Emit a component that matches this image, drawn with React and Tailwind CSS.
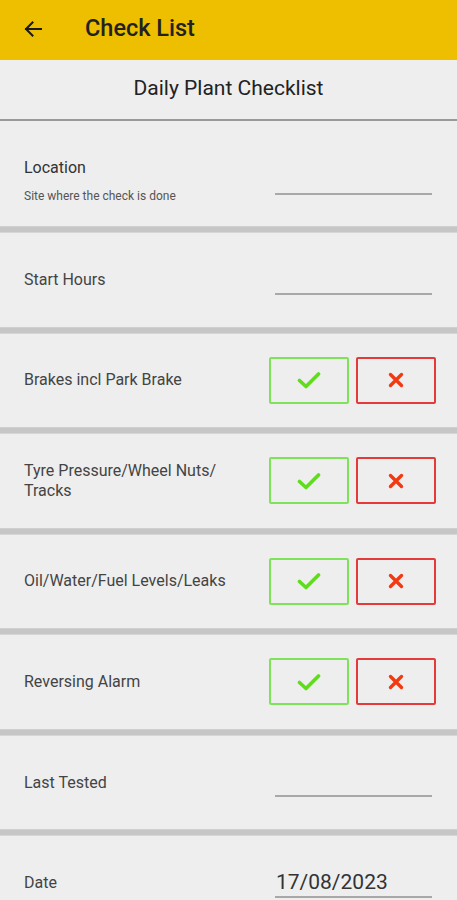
import React from "react";

const font = { fontFamily: "Roboto, 'Noto Sans', Arial, sans-serif" };

function Band() {
  return <div className="h-[7px] bg-[#c6c6c6] border-t border-b border-t-[#cfcfcf] border-b-[#d6d6d6]" />;
}

function Check() {
  return (
    <svg width="24" height="18" viewBox="0 0 24 18">
      <path d="M2.5 9.5 L9 15.5 L21.5 3" fill="none" stroke="#5fdc1c" strokeWidth="3.6" strokeLinecap="round" strokeLinejoin="round" />
    </svg>
  );
}

function Cross() {
  return (
    <svg width="16" height="16" viewBox="0 0 16 16">
      <path d="M2.5 2.5 L13.5 13.5 M13.5 2.5 L2.5 13.5" fill="none" stroke="#f23a12" strokeWidth="3.4" strokeLinecap="round" />
    </svg>
  );
}

function CheckRow({ label }) {
  return (
    <div className="h-[93.5px] flex items-center pl-[24px] pr-[21px]">
      <div className="flex-1 text-[16px] leading-[20px] text-[#444] pr-2">{label}</div>
      <div className="flex gap-[7px]">
        <div className="w-[80px] h-[47px] border-2 border-[#7fe35a] rounded-[2px] flex items-center justify-center">
          <Check />
        </div>
        <div className="w-[80px] h-[47px] border-2 border-[#e53a3a] rounded-[2px] flex items-center justify-center">
          <Cross />
        </div>
      </div>
    </div>
  );
}

function InputRow({ label, value }) {
  return (
    <div className="h-[93.5px] flex items-center pl-[24px] pr-[25px]">
      <div className="flex-1 text-[16px] leading-[20px] text-[#444] pt-[1px]">{label}</div>
      <div className="w-[157px] h-[30px] border-b-2 border-[#a8a8a8] flex items-end">
        {value && <span className="text-[21px] leading-[28px] text-[#333] pl-[1px]">{value}</span>}
      </div>
    </div>
  );
}

export default function App() {
  return (
    <div className="w-[457px] min-h-[900px] bg-[#eeeeee] overflow-hidden" style={font}>
      <div className="h-[60px] bg-[#edbf00] flex items-center">
        <svg className="ml-[24px] -mt-[2px]" width="18" height="18" viewBox="0 0 18 18">
          <path d="M17 9 H2 M8.5 2.5 L2 9 L8.5 15.5" fill="none" stroke="#1a1a1a" strokeWidth="2" strokeLinecap="square" />
        </svg>
        <div className="ml-[43px] text-[23.5px] font-medium text-[#222] leading-none -mt-[2px]">Check List</div>
      </div>
      <div className="h-[59px] flex items-center justify-center text-[21px] text-[#222] -mt-[1px]">
        Daily Plant Checklist
      </div>
      <div className="h-[2px] bg-[#9a9a9a] mt-[1px]" />
      <div className="h-[105px] flex items-center pl-[24px] pr-[25px] pt-[13px]">
        <div className="flex-1">
          <div className="text-[16px] leading-[20px] text-[#333]">Location</div>
          <div className="text-[12px] leading-[14px] text-[#555] mt-[11px]">Site where the check is done</div>
        </div>
        <div className="w-[157px] h-[30px] border-b-2 border-[#a8a8a8]" />
      </div>
      <Band />
      <InputRow label="Start Hours" />
      <Band />
      <CheckRow label="Brakes incl Park Brake" />
      <Band />
      <CheckRow label={<>Tyre Pressure/Wheel Nuts/<br />Tracks</>} />
      <Band />
      <CheckRow label="Oil/Water/Fuel Levels/Leaks" />
      <Band />
      <CheckRow label="Reversing Alarm" />
      <Band />
      <InputRow label="Last Tested" />
      <Band />
      <InputRow label="Date" value="17/08/2023" />
    </div>
  );
}
